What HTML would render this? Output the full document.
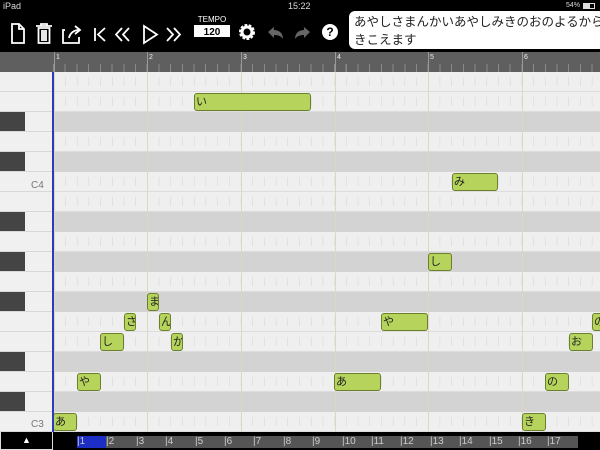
<!DOCTYPE html>
<html><head><meta charset="utf-8"><style>
*{margin:0;padding:0;box-sizing:border-box}
body{width:600px;height:450px;overflow:hidden;background:#000;position:relative;font-family:"Liberation Sans","Noto Sans CJK JP",sans-serif}
.abs{position:absolute}
.row{position:absolute;left:53px;width:547px;height:20px;border-bottom:1px solid #dcdcdc}
.row.w{background:#efefef}.row.b{background:#d3d3d3;border-bottom-color:#d3d3d3}
.row i{position:absolute;left:0;right:0;top:5px;height:9px;background:repeating-linear-gradient(90deg,transparent 0,transparent 11px,#d2d2d2 11px,#d2d2d2 12px);background-size:11.71px 9px;background-position:1px 0}
.row.b i{background:none}
.key{position:absolute;left:0;width:52px;height:20px;background:#f0f0f0;border-bottom:1px solid #d8d8d8}
.bk{position:absolute;left:0;width:25px;height:19px;background:#444}
.ml{position:absolute;top:72px;height:360px;width:1px;background:#dcd8c2}
.n{position:absolute;height:18px;background:#b6d35c;border:1px solid #6b7f2c;border-radius:3px;font-size:11px;color:#222;line-height:16px;padding-left:1px;overflow:hidden}
.sb{position:absolute;top:436px;height:12px;font-size:10px;color:#ccc;line-height:12px}
</style></head><body>
<div class="abs" style="left:3px;top:1px;font-size:9px;color:#ddd">iPad</div>
<div class="abs" style="left:288px;top:1px;font-size:9px;color:#ddd">15:22</div>
<div class="abs" style="left:566px;top:2px;font-size:7px;color:#ddd">54%</div>
<div class="abs" style="left:583px;top:3px;width:12px;height:6px;border:1px solid #ddd"><div style="width:6px;height:4px;background:#ddd"></div></div>
<svg class="abs" style="left:0;top:14px" width="350" height="38" viewBox="0 0 350 38">
<g fill="none" stroke="#fff" stroke-width="1.8">
<path d="M12 10h7l5 5v14H12z M19 10v5h5"/>
<path d="M36 12h16 M41 12v-2h6v2 M38.5 14h11v15h-11z M42 16v11 M44 16v11 M46 16v11"/>
<path d="M65 16h-2v13h16v-6 M69 24c1-5 5-8 10-8 M75 12l5 4-5 4"/>
<path d="M95 14v13 M105 14l-7 6.5 7 6.5"/>
<path d="M122 14l-6 6.5 6 6.5 M129 14l-6 6.5 6 6.5"/>
<path d="M144 12l13 8.5-13 8.5z"/>
<path d="M167 14l6 6.5-6 6.5 M174 14l6 6.5-6 6.5"/>
</g>
<text x="212" y="8" fill="#fff" font-size="8" text-anchor="middle" font-family="Liberation Sans">TEMPO</text>
<rect x="194" y="11" width="36" height="12" fill="#fff"/>
<text x="212" y="21" fill="#000" font-size="10" font-weight="bold" text-anchor="middle" font-family="Liberation Sans">120</text>
<g transform="translate(247,18)"><circle r="6" fill="none" stroke="#fff" stroke-width="4" stroke-dasharray="2.4 1.3"/><circle r="5" fill="none" stroke="#fff" stroke-width="3"/></g>
<path d="M268 18l6-5v3c5 0 9 3 9 9 -2-3-5-4-9-4v3z" fill="#666"/>
<path d="M310 18l-6-5v3c-5 0-9 3-9 9 2-3 5-4 9-4v3z" fill="#666"/>
<circle cx="330" cy="18" r="8" fill="#fff"/>
<text x="330" y="22" fill="#000" font-size="12" font-weight="bold" text-anchor="middle" font-family="Liberation Sans">?</text>
</svg>
<div class="abs" style="left:349px;top:11px;width:256px;height:38px;background:#fff;border-radius:6px;font-size:12.5px;line-height:18px;padding:2px 0 0 5px;color:#222">あやしさまんかいあやしみきのおのよるから<br>きこえます</div>
<div class="abs" style="left:0;top:52px;width:600px;height:20px;background:#5f5f5f"></div>
<div class="abs" style="left:53px;top:64px;width:547px;height:8px;background:repeating-linear-gradient(90deg,#8a8a8a 0,#8a8a8a 1px,transparent 1px,transparent 11.71px)"></div>
<script>
var h='',rows='';
for(var i=0;i<18;i++){var y=72+i*20;var bl=[2,4,7,9,11,14,16].indexOf(i)>=0;
rows+='<div class="row '+(bl?'b':'w')+'" style="top:'+y+'px"><i></i></div>';
h+='<div class="key" style="top:'+y+'px"></div>';if(bl)h+='<div class="bk" style="top:'+y+'px"></div>';}
document.write(h+rows);
var m='';for(var k=0;k<6;k++){var x=Math.round(53.5+k*93.7);m+='<div class="ml" style="left:'+x+'px"></div><div class="abs" style="left:'+x+'px;top:52px;width:1px;height:20px;background:#9a9a9a"></div><div class="abs" style="left:'+(x+2)+'px;top:54px;font-size:7px;color:#eee">'+(k+1)+'</div>';}
document.write(m);
var N=[['あ',53,412,24],['や',77,372,24],['し',100,332,24],['さ',124,312,12],['ま',147,292,12],['ん',159,312,12],['か',171,332,12],['い',194,92,117],['み',452,172,46],['し',428,252,24],['や',381,312,47],['あ',334,372,47],['き',522,412,24],['の',545,372,24],['お',569,332,24],['の',592,312,12]];
var s='';N.forEach(function(a){s+='<div class="n" style="left:'+a[1]+'px;top:'+(a[2]+1)+'px;width:'+a[3]+'px">'+a[0]+'</div>';});document.write(s);
</script>
<div class="abs" style="left:31px;top:180px;font-size:10px;color:#777">C4</div>
<div class="abs" style="left:31px;top:419px;font-size:10px;color:#777">C3</div>
<div class="abs" style="left:52px;top:72px;width:2px;height:360px;background:#2b3bbf"></div>
<div class="abs" style="left:0;top:432px;width:53px;height:18px;border:1px solid #ddd;border-top:none;background:#000;color:#fff;font-size:9px;text-align:center;line-height:16px">▲</div>
<div class="abs" style="left:77px;top:436px;width:501px;height:12px;background:#555"></div>
<div class="abs" style="left:77px;top:436px;width:29px;height:12px;background:#1d2ec4"></div>
<script>
var b='';for(var j=1;j<=17;j++){b+='<div class="sb" style="left:'+Math.round(77+(j-1)*29.4)+'px">|'+j+'</div>';}document.write(b);
</script>
</body></html>
